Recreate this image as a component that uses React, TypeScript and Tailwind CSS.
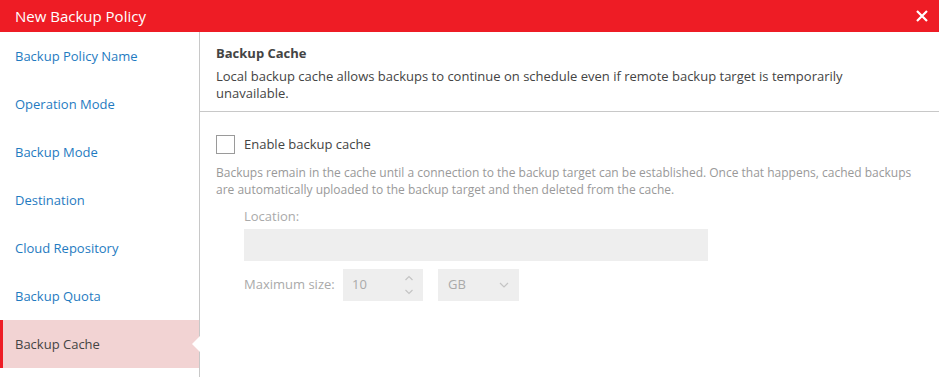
import React from "react";

const navItems = [
  "Backup Policy Name",
  "Operation Mode",
  "Backup Mode",
  "Destination",
  "Cloud Repository",
  "Backup Quota",
  "Backup Cache",
];

export default function App() {
  return (
    <div
      className="w-[939px] h-[377px] bg-white flex flex-col overflow-hidden"
      style={{ fontFamily: '"Open Sans", "Noto Sans", sans-serif' }}
    >
      <div className="h-[32px] bg-[#ee1c25] flex items-center justify-between pl-[15px] pr-[10px] shrink-0">
        <span className="text-white text-[15px] leading-none">New Backup Policy</span>
        <svg width="14" height="14" viewBox="0 0 14 14">
          <path d="M2 2 L12 12 M12 2 L2 12" stroke="white" strokeWidth="2.2" />
        </svg>
      </div>
      <div className="flex flex-1 min-h-0">
        <div className="w-[200px] shrink-0 border-r border-[#c8c8c8] flex flex-col">
          {navItems.map((item) => {
            const active = item === "Backup Cache";
            return (
              <div
                key={item}
                className={
                  active
                    ? "relative h-[48px] flex items-center pt-[2px] pl-[15px] bg-[#f2d3d3] text-[#444444] text-[13px] border-l-[3px] border-[#ee1c25]"
                    : "h-[48px] flex items-center pt-[2px] pl-[15px] text-[#1f7bc1] text-[13px]"
                }
              >
                <span className={active ? "-ml-[3px]" : ""}>{item}</span>
                {active && (
                  <div className="absolute right-[-1px] top-1/2 -translate-y-1/2 w-0 h-0 border-y-[8px] border-y-transparent border-r-[8px] border-r-white" />
                )}
              </div>
            );
          })}
        </div>
        <div className="flex-1 flex flex-col">
          <div className="pl-[16px] pr-[24px] pt-[12px] pb-[9px] border-b border-[#c8c8c8]">
            <div className="text-[13px] font-bold text-[#444444] leading-[18px]">Backup Cache</div>
            <div className="mt-[6px] text-[13px] text-[#444444] leading-[17px]">
              Local backup cache allows backups to continue on schedule even if remote backup target is temporarily
              unavailable.
            </div>
          </div>
          <div className="pl-[16px] pr-[24px] pt-[23px]">
            <div className="flex items-center gap-[9px]">
              <div className="w-[19px] h-[19px] border border-[#9a9a9a] bg-white" />
              <span className="text-[13px] text-[#444444]">Enable backup cache</span>
            </div>
            <div className="mt-[9px] text-[12px] leading-[17px] text-[#999999]">
              Backups remain in the cache until a connection to the backup target can be established. Once that happens, cached backups
              are automatically uploaded to the backup target and then deleted from the cache.
            </div>
            <div className="pl-[28px] mt-[9px]">
              <div className="text-[13px] text-[#aaaaaa] leading-[18px]">Location:</div>
              <div className="mt-[4px] w-[464px] h-[32px] bg-[#eeeeee]" />
              <div className="mt-[8px] flex items-center">
                <span className="text-[13px] text-[#aaaaaa] w-[99px]">Maximum size:</span>
                <div className="w-[80px] h-[32px] bg-[#eeeeee] flex items-center justify-between pl-[9px] pr-[9px]">
                  <span className="text-[13px] text-[#aaaaaa]">10</span>
                  <svg width="10" height="22" viewBox="0 0 10 22">
                    <path d="M1.5 6 L5 2.5 L8.5 6" stroke="#c4c4c4" strokeWidth="1.2" fill="none" />
                    <path d="M1.5 16 L5 19.5 L8.5 16" stroke="#c4c4c4" strokeWidth="1.2" fill="none" />
                  </svg>
                </div>
                <div className="ml-[15px] w-[81px] h-[32px] bg-[#eeeeee] flex items-center justify-between pl-[10px] pr-[10px]">
                  <span className="text-[13px] text-[#aaaaaa]">GB</span>
                  <svg width="10" height="6" viewBox="0 0 10 6">
                    <path d="M1 1 L5 5 L9 1" stroke="#c4c4c4" strokeWidth="1.2" fill="none" />
                  </svg>
                </div>
              </div>
            </div>
          </div>
        </div>
      </div>
    </div>
  );
}
